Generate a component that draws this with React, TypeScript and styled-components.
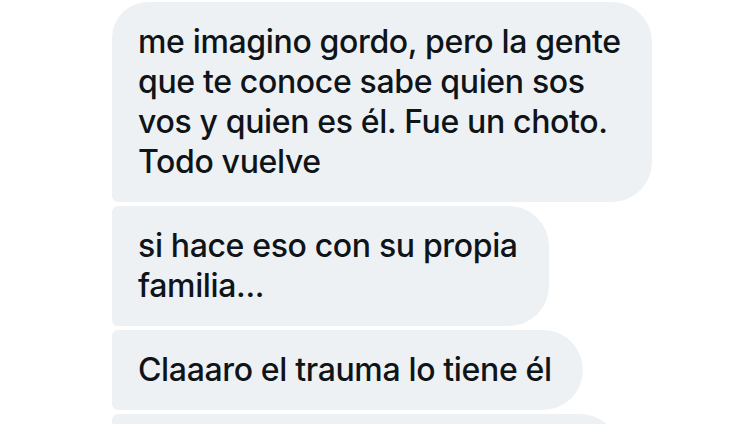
import React from "react";
import styled, { createGlobalStyle } from "styled-components";

const GlobalStyle = createGlobalStyle`
  html, body {
    margin: 0;
    padding: 0;
    background: #ffffff;
    overflow: hidden;
  }
`;

const Thread = styled.div`
  display: flex;
  flex-direction: column;
  align-items: flex-start;
  gap: 4px;
  padding: 2px 0 0 112px;
  width: 750px;
  height: 424px;
  box-sizing: border-box;
  overflow: hidden;
`;

const Bubble = styled.div<{ $first?: boolean; $w?: number }>`
  box-sizing: border-box;
  background: #eef1f4;
  color: #0f1419;
  font-family: Inter, "Noto Sans", sans-serif;
  font-size: 32px;
  font-weight: 500;
  line-height: 40px;
  letter-spacing: -0.35px;
  white-space: nowrap;
  padding: 20px 31px 20px 26px;
  min-height: 80px;
  width: ${(p) => (p.$w ? `${p.$w}px` : "auto")};
  border-radius: ${(p) => (p.$first ? "36px" : "6px")} 40px 40px 6px;
  flex-shrink: 0;
`;

const messages: { lines: string[]; first?: boolean }[] = [
  {
    first: true,
    lines: [
      "me imagino gordo, pero la gente",
      "que te conoce sabe quien sos",
      "vos y quien es él. Fue un choto.",
      "Todo vuelve",
    ],
  },
  { lines: ["si hace eso con su propia", "familia..."] },
  { lines: ["Claaaro el trauma lo tiene él"] },
];

export default function App() {
  return (
    <>
      <GlobalStyle />
      <Thread>
        {messages.map((m, i) => (
          <Bubble key={i} $first={m.first}>
            {m.lines.map((l, j) => (
              <React.Fragment key={j}>
                {j > 0 && <br />}
                {l}
              </React.Fragment>
            ))}
          </Bubble>
        ))}
        <Bubble $w={508} />
      </Thread>
    </>
  );
}
